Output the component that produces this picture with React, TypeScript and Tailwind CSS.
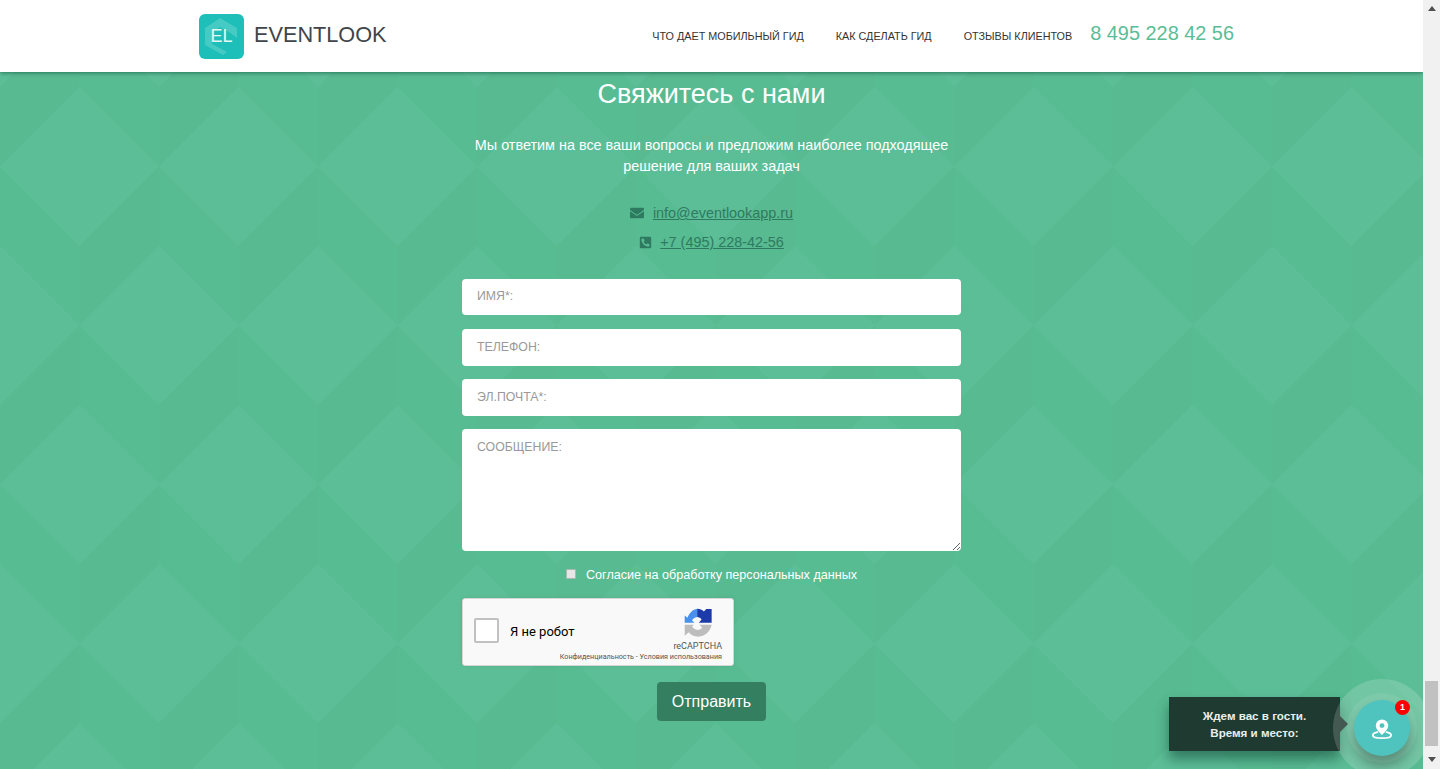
import { FaEnvelope, FaPhoneSquareAlt } from "react-icons/fa"

const navItems = ["Что дает мобильный гид", "Как сделать гид", "Отзывы клиентов"]

function Backdrop() {
  return (
    <svg className="absolute inset-0 w-full h-full" aria-hidden="true">
      <defs>
        <pattern id="cubes" width="159" height="318" patternUnits="userSpaceOnUse" patternTransform="translate(0 15)">
          <rect width="159" height="318" fill="#58bc93" />
          {/* dark faces */}
          <polygon points="159,79.5 79.5,159 79.5,238.5 159,159" fill="#58ba91" />
          <polygon points="79.5,238.5 0,318 0,397 79.5,318" fill="#58ba91" />
          <polygon points="79.5,-79.5 0,0 0,79.5 79.5,0" fill="#58ba91" />
          {/* diamonds */}
          <polygon points="79.5,0 159,79.5 79.5,159 0,79.5" fill="#5cbe97" />
          <polygon points="0,159 79.5,238.5 0,318 -79.5,238.5" fill="#5cbe97" />
          <polygon points="159,159 238.5,238.5 159,318 79.5,238.5" fill="#5cbe97" />
        </pattern>
      </defs>
      <rect width="100%" height="100%" fill="url(#cubes)" />
    </svg>
  )
}

function Header() {
  return (
    <header className="relative z-10 h-[72px] shrink-0 bg-white shadow-[0_1px_4px_rgba(0,60,40,0.55)] flex items-center pl-[199px] pr-[189px]">
      <div className="w-[45px] h-[45px] rounded-[6px] bg-[#1dbfb8] flex items-center justify-center relative overflow-hidden">
        <svg viewBox="0 0 45 45" className="absolute inset-0 w-full h-full">
          <path d="M6 14 L21 4 L38 14 L38 24 L30 18 L21 13 L13 18 L13 30 L28 38 L24 41 L6 31 Z" fill="#fff" fillOpacity="0.18" />
        </svg>
        <span className="relative text-[18px] text-[#e4f8f6]">EL</span>
      </div>
      <span className="ml-[10px] -mt-[2px] text-[21.7px] text-[#404549]">EVENTLOOK</span>
      <nav className="ml-auto flex items-center">
        <a className="text-[10.8px] uppercase text-[#333]">{navItems[0]}</a>
        <a className="ml-[32px] text-[10.8px] uppercase text-[#333]">{navItems[1]}</a>
        <a className="ml-[32px] text-[10.8px] uppercase text-[#333]">{navItems[2]}</a>
        <span className="ml-[18px] -mt-[4px] text-[19.9px] text-[#5bbd95]">8 495 228 42 56</span>
      </nav>
    </header>
  )
}

function Recaptcha() {
  return (
    <div className="w-[272px] h-[68px] shrink-0 bg-[#f9f9f9] border border-[#d6d6d6] rounded-[3px] flex font-['Roboto',sans-serif] shadow-[0_0_4px_rgba(0,0,0,0.08)]">
      <div className="shrink-0 ml-[11px] mt-[19px] w-[25px] h-[25px] bg-white border-2 border-[#c1c1c1] rounded-[2px]" />
      <span className="ml-[11px] mt-[24px] text-[13px] leading-[17px] text-black whitespace-nowrap">Я не робот</span>
      <div className="ml-auto mr-[11px] w-0 shrink-0 flex flex-col items-end">
        <svg viewBox="20 15 95 95" className="w-[32px] h-[32px] shrink-0 mt-[8px] mr-[8px]">
          <path d="M28 62 L28 40 L36 47 C42 32 52 22 65 20 L65 45 C58 47 52 50 50 55 L57 62 Z" fill="#4a90ee" />
          <path d="M65 20 C73 20 80 23 85 28 L92 21 L108 21 L108 62 L70 62 L78 52 C76 48 70 45 65 45 Z" fill="#1c3aa9" />
          <path d="M28 68 L55 68 L50 74 C54 80 60 83 66 83 C72 83 78 80 80 76 L72 68 L108 68 C104 88 88 103 68 103 C56 103 46 98 40 90 L28 100 Z" fill="#bdbdbd" />
        </svg>
        <span className="text-[9px] leading-[12px] mt-[1px] text-[#555] whitespace-nowrap">reCAPTCHA</span>
        <span className="text-[7.2px] leading-[10px] text-[#555] whitespace-nowrap">Конфиденциальность - Условия использования</span>
      </div>
    </div>
  )
}

function Widget() {
  return (
    <div className="absolute right-[13px] bottom-[13px] flex items-start">
      <div className="relative -mt-[3px] w-[171px] h-[54px] bg-[#1f3a30] shadow-[0_8px_12px_rgba(0,40,30,0.45)] flex items-center justify-center text-center text-[11.6px] leading-[17px] font-bold text-[#e9efec] mr-[14px]">
        <span>Ждем вас в гости.<br />Время и место:</span>
        <div className="absolute left-full top-1/2 -translate-y-1/2 border-y-[8px] border-y-transparent border-l-[8px] border-l-[#1f3a30]" />
      </div>
      <div className="relative w-[56px] h-[56px] rounded-full bg-[#4fc4bf] shadow-[0_0_0_7px_rgba(255,255,255,0.08),0_0_0_21px_rgba(255,255,255,0.16),0_10px_14px_rgba(0,30,20,0.5)] flex items-center justify-center">
        <svg viewBox="0 0 24 24" className="w-[22px] h-[22px] mt-[2px]" fill="none">
          <path fillRule="evenodd" clipRule="evenodd" d="M12 1.5 A6.8 6.8 0 0 0 5.2 8.3 C5.2 12 9.5 16.5 12 18.5 C14.5 16.5 18.8 12 18.8 8.3 A6.8 6.8 0 0 0 12 1.5 Z M12 5.6 A2.7 2.7 0 1 1 12 11 A2.7 2.7 0 1 1 12 5.6 Z" fill="#fff" />
          <path d="M7 15.5 C3.8 16.2 2 17.4 2 18.8 C2 20.8 6.5 22 12 22 C17.5 22 22 20.8 22 18.8 C22 17.4 20.2 16.2 17 15.5" stroke="#fff" strokeWidth="2" strokeLinecap="round" />
        </svg>
        <span className="absolute top-[0px] right-[0px] w-[15px] h-[15px] rounded-full bg-[#ff0000] text-white text-[9px] font-bold flex items-center justify-center">1</span>
      </div>
    </div>
  )
}

function Scrollbar() {
  return (
    <div className="w-[17px] shrink-0 bg-[#f1f1f1] flex flex-col items-center">
      <div className="mt-[6px] border-x-[4px] border-x-transparent border-b-[5px] border-b-[#505050]" />
      <div className="mt-[670px] w-[13px] h-[65px] bg-[#c1c1c1]" />
      <div className="mt-[11px] border-x-[4px] border-x-transparent border-t-[5px] border-t-[#505050]" />
    </div>
  )
}

const fieldClass =
  "w-full bg-white rounded-[4px] px-[15px] text-[12.3px] text-[#333] placeholder:text-[#999] outline-none"

export default function App() {
  return (
    <div className="h-[769px] overflow-hidden flex font-['Liberation_Sans',sans-serif]">
      <div className="flex-1 flex flex-col relative overflow-hidden">
        <Header />

        <main className="flex-1 relative flex flex-col items-center">
          <Backdrop />

          <div className="relative w-[499px] flex flex-col items-center">
            <h1 className="mt-[5px] text-[27px] leading-[34px] text-white">Свяжитесь с нами</h1>
            <p className="mt-[24px] w-[490px] text-center text-[14.4px] leading-[21px] text-white">
              Мы ответим на все ваши вопросы и предложим наиболее подходящее решение для ваших задач
            </p>

            {/* Contacts */}
            <div className="mt-[26px] flex items-center text-[14.4px] leading-[20px] text-[#2e7a60]">
              <FaEnvelope className="w-[14px] h-[14px] mr-[9px]" />
              <a className="underline">info@eventlookapp.ru</a>
            </div>
            <div className="mt-[9px] flex items-center text-[14.4px] leading-[20px] text-[#2e7a60]">
              <FaPhoneSquareAlt className="w-[13px] h-[13px] mr-[8px]" />
              <a className="underline">+7 (495) 228-42-56</a>
            </div>

            {/* Form */}
            <form className="w-full mt-[27px] flex flex-col items-center">
              <input className={`${fieldClass} h-[36px] pb-[3px]`} placeholder="ИМЯ*:" />
              <input className={`${fieldClass} h-[37px] mt-[14px] pb-[2px]`} placeholder="ТЕЛЕФОН:" />
              <input className={`${fieldClass} h-[37px] mt-[13px] pb-[2px]`} placeholder="ЭЛ.ПОЧТА*:" />
              <textarea className={`${fieldClass} h-[122px] mt-[13px] pt-[9px] block`} placeholder="СООБЩЕНИЕ:" />

              <label className="mt-[14px] flex items-center text-[12.6px] leading-[20px] text-white">
                <span className="w-[10px] h-[10px] bg-[#e6e6e6] border border-[#a9b8b0] rounded-[1px] mr-[10px] -mt-[3px]" />
                <span>Согласие на обработку персональных данных</span>
              </label>

              <div className="mt-[13px] w-full flex"><Recaptcha /></div>

              <button type="button" className="mt-[16px] w-[109px] h-[39px] rounded-[4px] bg-[#357f61] text-white text-[16px]">
                Отправить
              </button>
            </form>
          </div>
        </main>

        <Widget />
      </div>
      <Scrollbar />
    </div>
  )
}
